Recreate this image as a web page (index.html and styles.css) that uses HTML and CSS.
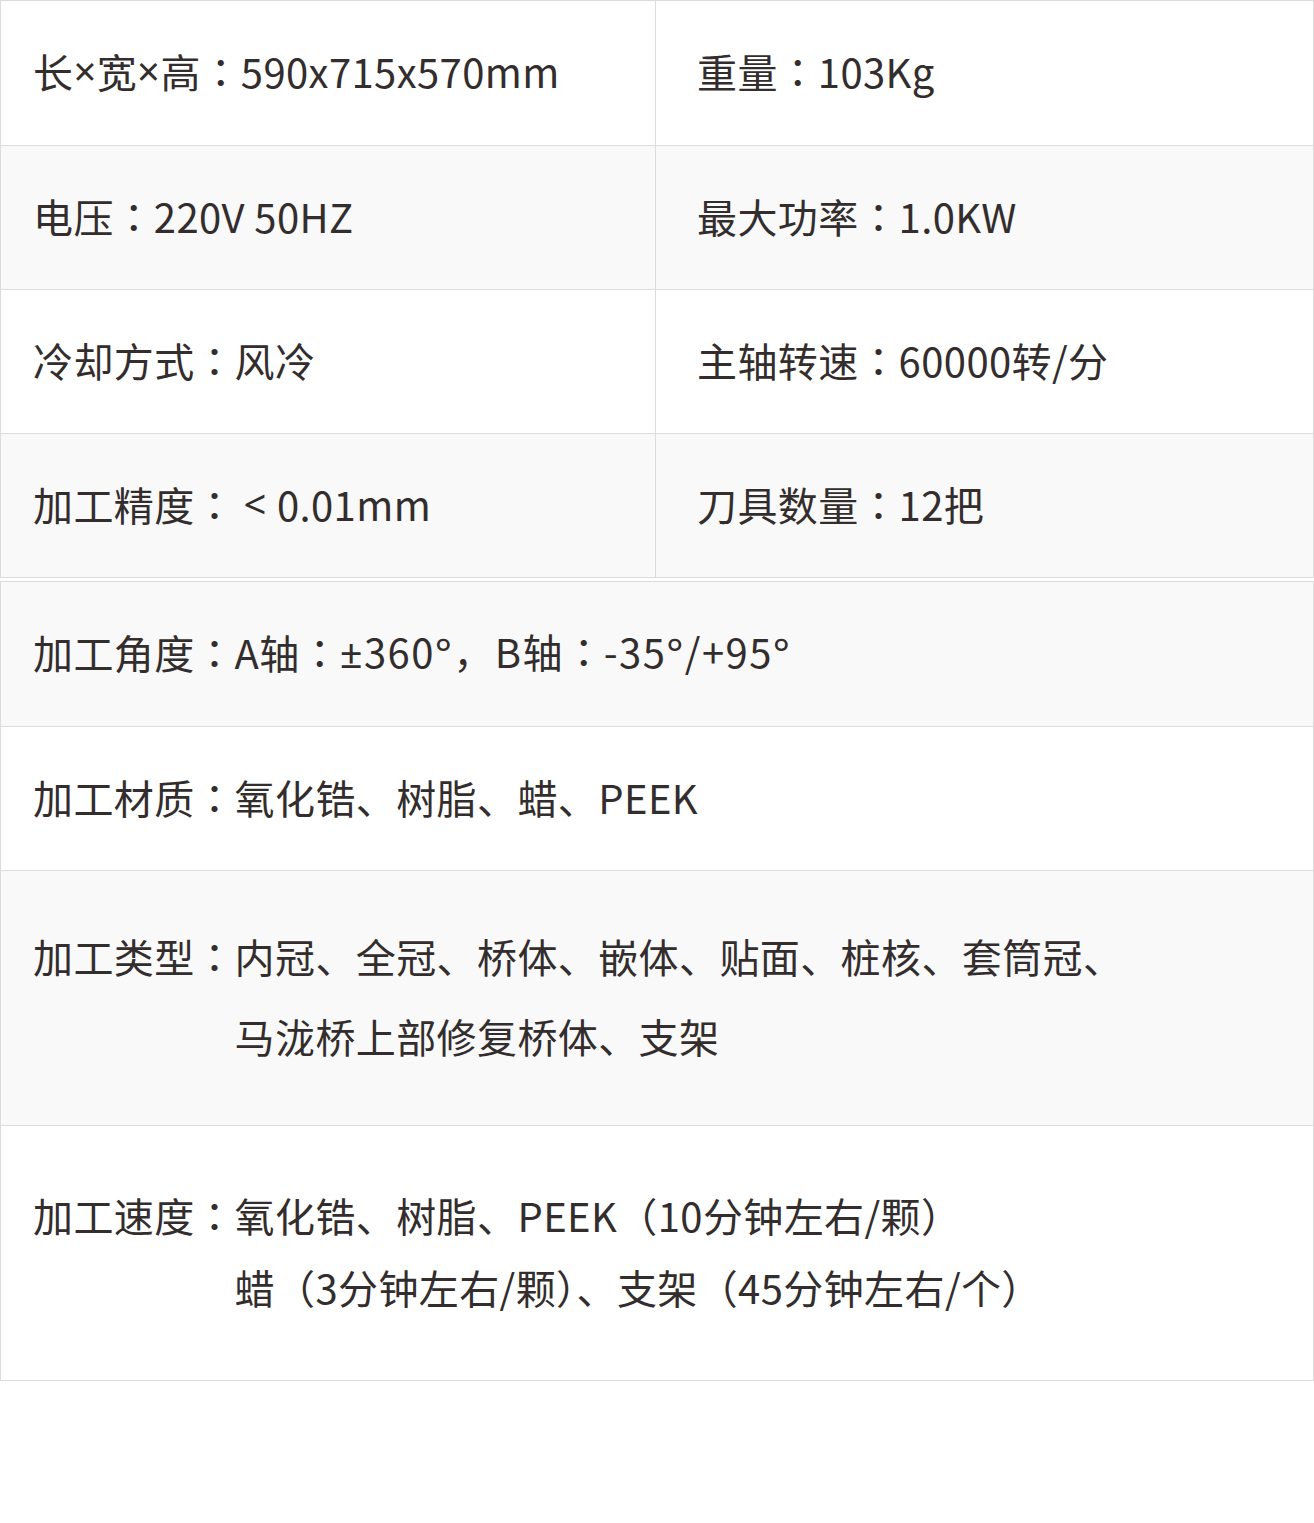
FILE: index.html
```html
<!DOCTYPE html>
<html lang="zh-CN">
<head>
<meta charset="utf-8">
<title>参数</title>
<link rel="stylesheet" href="styles.css">
</head>
<body>
<div class="specs">
  <div class="grid two">
    <div class="cell left r1">长<span class="sym">×</span>宽<span class="sym">×</span>高<span class="colon" lang="ja">：</span>590x715x570mm</div>
    <div class="cell right r1">重量<span class="colon" lang="ja">：</span>103Kg</div>
    <div class="cell left alt">电压<span class="colon" lang="ja">：</span>220V 50HZ</div>
    <div class="cell right alt">最大功率<span class="colon" lang="ja">：</span>1.0KW</div>
    <div class="cell left">冷却方式<span class="colon" lang="ja">：</span>风冷</div>
    <div class="cell right">主轴转速<span class="colon" lang="ja">：</span>60000转/分</div>
    <div class="cell left alt">加工精度<span class="colon" lang="ja">：</span><span class="lt">&lt;</span>0.01mm</div>
    <div class="cell right alt">刀具数量<span class="colon" lang="ja">：</span>12把</div>
  </div>
  <div class="grid one">
    <div class="cell full alt r1">加工角度<span class="colon" lang="ja">：</span>A轴<span class="colon" lang="ja">：</span><span class="wide"><span class="sym">±</span>360<span class="sym">°</span>，B轴<span class="colon" lang="ja">：</span>-35<span class="sym">°</span>/+95<span class="sym">°</span></span></div>
    <div class="cell full">加工材质<span class="colon" lang="ja">：</span>氧化锆、树脂、蜡、PEEK</div>
    <div class="cell full alt tall">
      <div class="pair lh80">
        <span class="label">加工类型<span class="colon" lang="ja">：</span></span>
        <span class="value">内冠、全冠、桥体、嵌体、贴面、桩核、套筒冠、<br>马泷桥上部修复桥体、支架</span>
      </div>
    </div>
    <div class="cell full tall">
      <div class="pair lh72">
        <span class="label">加工速度<span class="colon" lang="ja">：</span></span>
        <span class="value">氧化锆、树脂、PEEK（10分钟左右/颗）<br>蜡（3分钟左右/颗）、支架（45分钟左右/个）</span>
      </div>
    </div>
  </div>
</div>
</body>
</html>
```

FILE: styles.css
```css
html, body {
  margin: 0;
  padding: 0;
  background: #ffffff;
}

body {
  font-family: "Noto Sans CJK SC", "Noto Sans", sans-serif;
  color: #332d2d;
  font-size: 40px;
  width: 1314px;
}

.specs {
  display: flex;
  flex-direction: column;
  gap: 3px;
}

.grid {
  display: grid;
  border: 1px solid #dcdcdc;
  border-bottom: none;
  box-sizing: border-box;
  width: 1314px;
}

.grid.two {
  grid-template-columns: 655px 1fr;
}

.grid.one {
  grid-template-columns: 1fr;
}

.cell {
  box-sizing: border-box;
  height: 144px;
  border-bottom: 1px solid #dcdcdc;
  display: flex;
  align-items: center;
  background: #ffffff;
  line-height: 1.45;
  white-space: nowrap;
  padding-bottom: 4px;
  letter-spacing: 0.4px;
}

.cell.r1 {
  height: 145px;
}

.cell.alt {
  background: #f9f9f9;
}

.cell.left {
  border-right: 1px solid #dcdcdc;
  padding-left: 32px;
}

.cell.right {
  padding-left: 41px;
}

.cell.full {
  padding-left: 32px;
}

.cell.tall {
  height: 255px;
}

.colon {
  font-family: "Noto Sans CJK JP", "Noto Sans CJK SC", sans-serif;
  letter-spacing: 0;
}

.sym {
  font-family: "Noto Sans", "DejaVu Sans", sans-serif;
  font-size: 40px;
}

.wide {
  letter-spacing: 1.4px;
}

.lt {
  font-family: "Noto Sans", "DejaVu Sans", sans-serif;
  font-size: 40px;
  margin-left: 9px;
  margin-right: 10px;
}

.pair {
  display: flex;
  align-items: flex-start;
}

.value {
  display: block;
}

.lh80 {
  line-height: 80px;
}

.lh72 {
  line-height: 72px;
}
```
